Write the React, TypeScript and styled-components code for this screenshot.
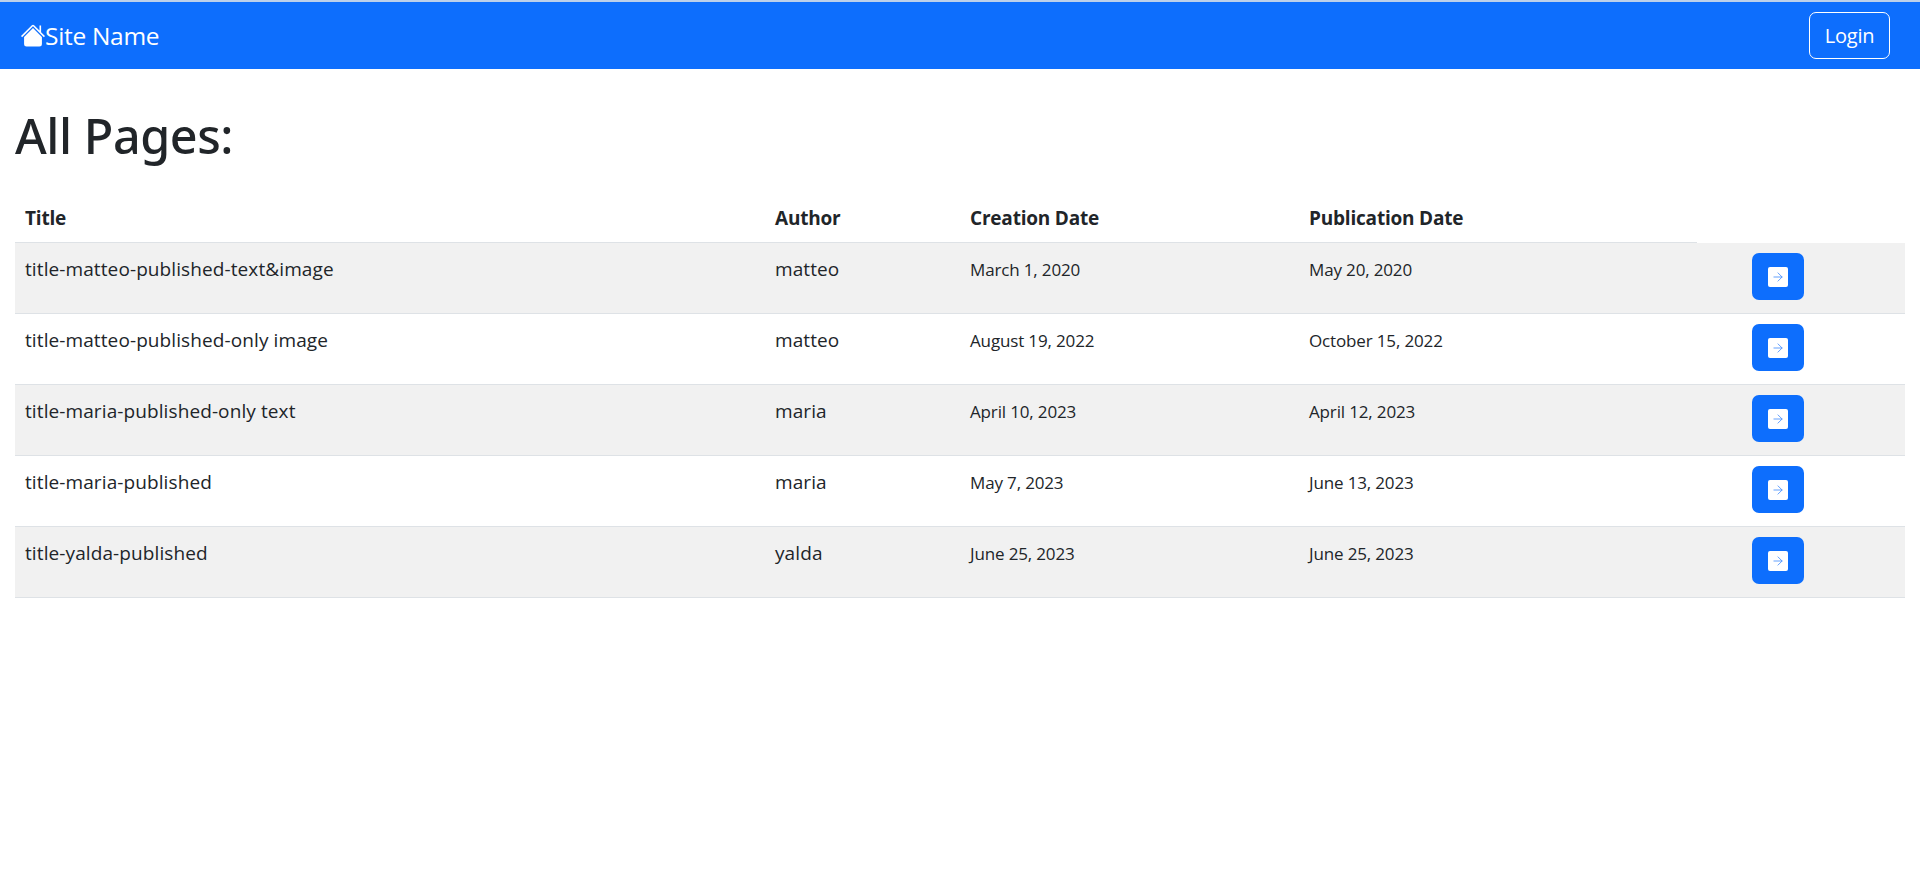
import styled, { createGlobalStyle } from "styled-components";
import { ArrowRight } from "lucide-react";

const GlobalStyle = createGlobalStyle`
  body {
    margin: 0;
    background: #fff;
    color: #212529;
    font-family: "Open Sans", "Noto Sans", sans-serif;
  }
`;

const TopLine = styled.div`
  height: 2px;
  background: #bcd0ea;
`;

const NavBar = styled.nav`
  height: 67px;
  box-sizing: border-box;
  background: #0d6efd;
  display: flex;
  align-items: center;
  justify-content: space-between;
  padding: 0 30px 0 21px;
`;

const Brand = styled.a`
  display: flex;
  align-items: center;
  color: #fff;
  font-size: 24.5px;
  letter-spacing: -0.3px;
`;

const LoginButton = styled.button`
  width: 81px;
  height: 47px;
  background: transparent;
  border: 1px solid #fff;
  border-radius: 7px;
  color: #fff;
  font-family: inherit;
  font-size: 20px;
  letter-spacing: -0.2px;
`;

const Main = styled.main`
  padding: 0 15px;
`;

const Heading = styled.h1`
  margin: 0;
  padding-top: 34px;
  height: 130px;
  box-sizing: border-box;
  font-family: "Noto Sans", "Open Sans", sans-serif;
  font-size: 48.5px;
  font-weight: 500;
  line-height: 64px;
  letter-spacing: -0.45px;
`;

const Table = styled.table`
  width: 1890px;
  table-layout: fixed;
  border-collapse: collapse;
`;

const HeadCell = styled.th<{ $plain?: boolean }>`
  padding: 3px 10px 8px;
  text-align: left;
  font-size: 19px;
  line-height: 32px;
  font-weight: 700;
  letter-spacing: -0.2px;
  border-bottom: ${(p) => (p.$plain ? "none" : "1px solid #dee2e6")};
`;

const Row = styled.tr<{ $striped: boolean }>`
  height: 71px;
  background: ${(p) => (p.$striped ? "#f1f1f1" : "#fff")};
  border-bottom: 1px solid #dee2e6;
`;

const Cell = styled.td`
  padding: 10px 10px 0;
  vertical-align: top;
  font-size: 19px;
  line-height: 32px;
  letter-spacing: 0.1px;
`;

const DateCell = styled(Cell)`
  padding-top: 11px;
  font-size: 17px;
  letter-spacing: -0.15px;
`;

const ActionCell = styled.td`
  padding: 10px 0 0 55px;
  vertical-align: top;
`;

const OpenButton = styled.button`
  width: 52px;
  height: 47px;
  padding: 1px 0 0;
  display: flex;
  align-items: center;
  justify-content: center;
  background: #0d6efd;
  border: none;
  border-radius: 7px;
`;

const ArrowBox = styled.span`
  width: 20px;
  height: 20px;
  display: flex;
  align-items: center;
  justify-content: center;
  background: #fff;
  border-radius: 2px;
  color: #4f94fd;
`;

const pages = [
  { title: "title-matteo-published-text&image", author: "matteo", created: "March 1, 2020", published: "May 20, 2020" },
  { title: "title-matteo-published-only image", author: "matteo", created: "August 19, 2022", published: "October 15, 2022" },
  { title: "title-maria-published-only text", author: "maria", created: "April 10, 2023", published: "April 12, 2023" },
  { title: "title-maria-published", author: "maria", created: "May 7, 2023", published: "June 13, 2023" },
  { title: "title-yalda-published", author: "yalda", created: "June 25, 2023", published: "June 25, 2023" },
];

function HomeIcon() {
  return (
    <svg width="24" height="23" viewBox="0.6 1.8 14.8 13.700" fill="#fff">
      <path d="M8.700 2.300a1 1 0 0 0-1.400 0L.6 9l.7.7L8 3l6.700 6.700.7-.7L13 6.600V2.500h-1v3.100z" />
      <path d="M8 4l5.500 5.500V14a1.500 1.500 0 0 1-1.500 1.500H4A1.500 1.500 0 0 1 2.500 14V9.500z" />
    </svg>
  );
}

export default function App() {
  return (
    <>
      <GlobalStyle />
      <TopLine />
      <NavBar>
        <Brand>
          <HomeIcon />
          Site Name
        </Brand>
        <LoginButton>Login</LoginButton>
      </NavBar>
      <Main>
        <Heading>All Pages:</Heading>
        <Table>
          <colgroup>
            <col style={{ width: 750 }} />
            <col style={{ width: 195 }} />
            <col style={{ width: 339 }} />
            <col style={{ width: 398 }} />
            <col style={{ width: 208 }} />
          </colgroup>
          <thead>
            <tr>
              <HeadCell>Title</HeadCell>
              <HeadCell>Author</HeadCell>
              <HeadCell>Creation Date</HeadCell>
              <HeadCell>Publication Date</HeadCell>
              <HeadCell $plain />
            </tr>
          </thead>
          <tbody>
            {pages.map((page, i) => (
              <Row key={page.title} $striped={i % 2 === 0}>
                <Cell>{page.title}</Cell>
                <Cell>{page.author}</Cell>
                <DateCell>{page.created}</DateCell>
                <DateCell>{page.published}</DateCell>
                <ActionCell>
                  <OpenButton>
                    <ArrowBox>
                      <ArrowRight size={14} strokeWidth={1.5} />
                    </ArrowBox>
                  </OpenButton>
                </ActionCell>
              </Row>
            ))}
          </tbody>
        </Table>
      </Main>
    </>
  );
}
